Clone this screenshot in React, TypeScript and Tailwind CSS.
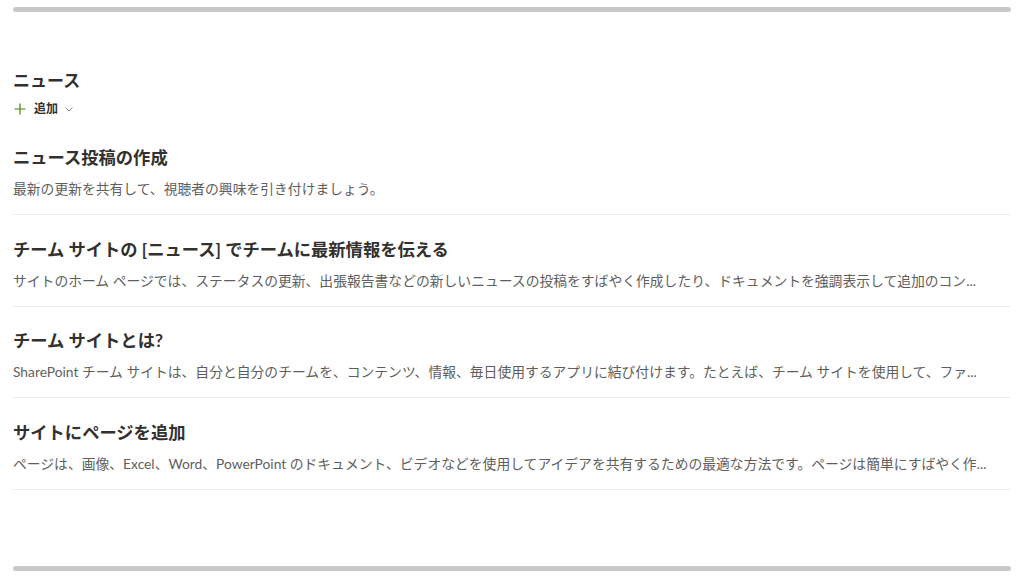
import React from "react";

interface NewsItem {
  title: string;
  description: string;
}

// descriptions as shown, already clipped with an ellipsis like the source list
const items: NewsItem[] = [
  {
    title: "ニュース投稿の作成",
    description: "最新の更新を共有して、視聴者の興味を引き付けましょう。",
  },
  {
    title: "チーム サイトの [ニュース] でチームに最新情報を伝える",
    description:
      "サイトのホーム ページでは、ステータスの更新、出張報告書などの新しいニュースの投稿をすばやく作成したり、ドキュメントを強調表示して追加のコン...",
  },
  {
    title: "チーム サイトとは?",
    description:
      "SharePoint チーム サイトは、自分と自分のチームを、コンテンツ、情報、毎日使用するアプリに結び付けます。たとえば、チーム サイトを使用して、ファ...",
  },
  {
    title: "サイトにページを追加",
    description:
      "ページは、画像、Excel、Word、PowerPoint のドキュメント、ビデオなどを使用してアイデアを共有するための最適な方法です。ページは簡単にすばやく作...",
  },
];

export default function App() {
  return (
    <div
      className="w-full h-[586px] bg-white flex flex-col overflow-hidden"
      style={{ fontFamily: 'Lato, "Noto Sans CJK JP", sans-serif' }}
    >
      {/* top scroll bar */}
      <div className="mx-[13px] mt-[7px] h-[5px] rounded-full bg-[#c8c8c8]" />

      <div className="flex-1 px-[13px]">
        <h2 className="mt-[57px] h-6 leading-6 text-[17px] font-bold text-[#323130]">ニュース</h2>

        <div className="mt-[6px] h-5 flex items-center gap-[6px] text-[#323130]">
          <svg width="12" height="12" viewBox="0 0 12 12" className="ml-[1px]">
            <path d="M6 0.5v11M0.5 6h11" stroke="#498205" strokeWidth="1.2" fill="none" />
          </svg>
          <span className="ml-[2px] text-[12px] font-bold leading-5">追加</span>
          <svg width="10" height="10" viewBox="0 0 10 10">
            <path d="M1.5 3.5L5 7l3.5-3.5" stroke="#8a8886" strokeWidth="1" fill="none" />
          </svg>
        </div>

        <div className="mt-[4.5px] mr-[1px]">
          {items.map((item) => (
            <div key={item.title} className="pt-[22.5px] pb-[15px] border-b border-[#edebe9]">
              <div className="h-6 leading-6 text-[17.3px] font-bold text-[#323130] whitespace-nowrap">
                {item.title}
              </div>
              <div className="mt-[9px] h-5 leading-5 text-[13.8px] text-[#605e5c] whitespace-nowrap">
                {item.description}
              </div>
            </div>
          ))}
        </div>
      </div>

      {/* bottom scroll bar */}
      <div className="mx-[13px] mb-[15px] h-[5px] rounded-full bg-[#c8c8c8]" />
    </div>
  );
}
